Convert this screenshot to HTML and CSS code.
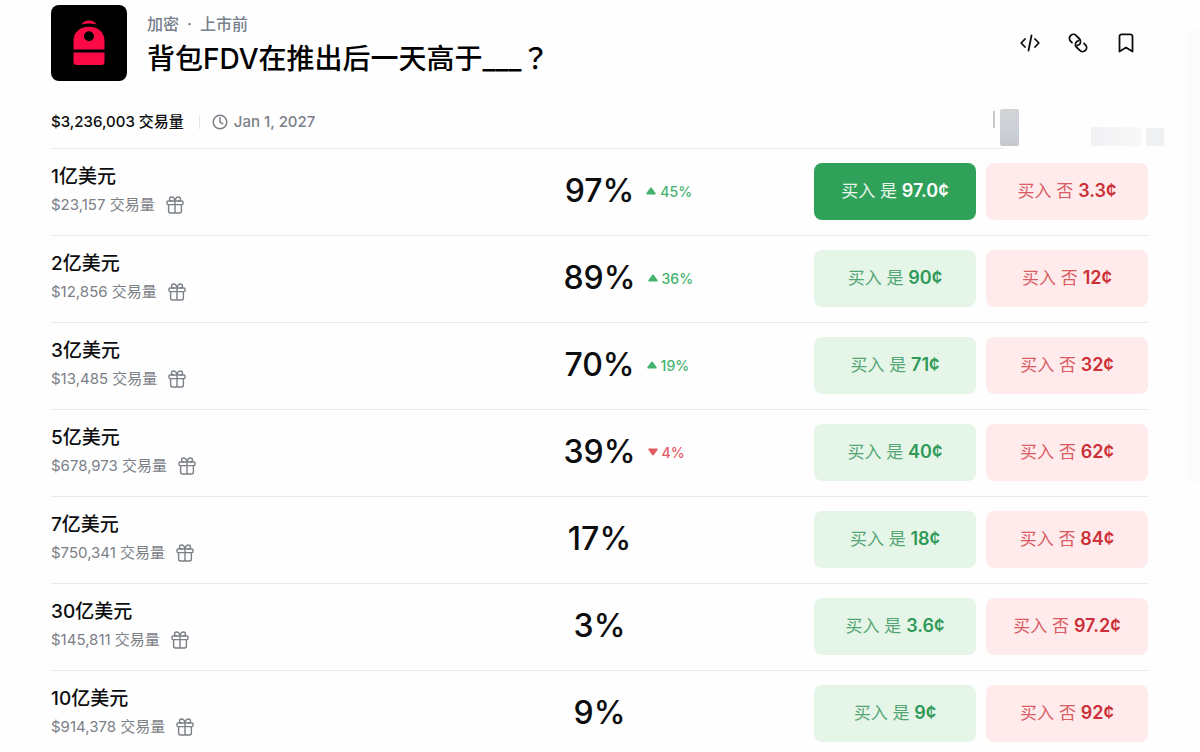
FILE: index.html
```html
<!DOCTYPE html>
<html lang="zh-CN">
<head>
<meta charset="utf-8">
<meta name="viewport" content="width=device-width, initial-scale=1">
<title>背包FDV在推出后一天高于___？</title>
<link rel="stylesheet" href="styles.css">
</head>
<body>
<svg class="sprite" aria-hidden="true">
  <symbol id="gift" viewBox="0 0 18 18"><g fill="none" stroke="currentColor" stroke-width="1.4" stroke-linecap="round" stroke-linejoin="round"><rect x="1" y="5" width="16" height="3.6" rx="1"/><path d="M2.6 8.6V15a2 2 0 0 0 2 2h8.8a2 2 0 0 0 2-2V8.600M9 5v12M9 5C8.600 2.600 7.300 1 5.500 1a2 2 0 0 0 0 4M9 5c.4-2.400 1.700-4 3.500-4a2 2 0 0 1 0 4"/></g></symbol>
  <symbol id="up" viewBox="0 0 10 8"><path d="M4.200.9.5 6.100C0 7 .5 7.600 1.300 7.600h7.400c.8 0 1.300-.6.8-1.500L5.800.9C5.400.3 4.600.3 4.200.9z" fill="currentColor"/></symbol>
  <symbol id="down" viewBox="0 0 10 8"><path d="M4.200 7.100.5 1.900C0 1 .5.400 1.300.400h7.400c.8 0 1.300.6.8 1.500L5.800 7.100c-.4.6-1.200.6-1.600 0z" fill="currentColor"/></symbol>
</svg>
<main class="page">
  <header class="head">
    <svg class="logo" viewBox="0 0 76 76" aria-hidden="true">
      <rect width="76" height="76" rx="8" fill="#000"/>
      <path d="M30.500 19.500c1.500-2.500 4.200-4 7.500-4s6 1.500 7.500 4c-4.600-1.300-10.400-1.300-15 0z" fill="#fb0a46"/>
      <path fill-rule="evenodd" d="M22.500 44.500V36c0-8.500 6-14.200 15.500-14.200S53.500 27.500 53.500 36v8.500zM38 26.300a5 5 0 1 0 0 10 5 5 0 0 0 0-10z" fill="#fb0a46"/>
      <path d="M22.500 47.500h31v9.500a3 3 0 0 1-3 3h-25a3 3 0 0 1-3-3z" fill="#fb0a46"/>
    </svg>
    <div class="heading">
      <p class="crumbs"><span>加密</span><span>·</span><span>上市前</span></p>
      <h1 class="title">背包FDV在推出后一天高于___<span class="mark" lang="zh-TW">？</span></h1>
    </div>
    <div class="tools">
      <button class="tool" aria-label="嵌入"><svg viewBox="0 0 20 20"><path d="M5 6 1.200 10 5 14M15 6l3.800 4-3.800 4M11.500 2.500l-3 15"/></svg></button>
      <button class="tool" aria-label="复制链接"><svg viewBox="0 0 20 20"><g transform="rotate(45 10 10)"><path d="M5.500 14H3.500a4 4 0 0 1 0-8H8a4 4 0 0 1 3.400 6.100"/><path d="M14.500 6h2a4 4 0 0 1 0 8H12a4 4 0 0 1-3.400-6.100"/></g></svg></button>
      <button class="tool" aria-label="收藏"><svg viewBox="0 0 20 20"><path d="M3.500 18.500V3.500a2.200 2.200 0 0 1 2.200-2.200h8.600a2.200 2.200 0 0 1 2.200 2.200v15L10 14.500z"/></svg></button>
    </div>
  </header>
  <div class="meta">
    <span class="total">$3,236,003 交易量</span>
    <span class="divider"></span>
    <svg class="clock" viewBox="0 0 16 16" aria-hidden="true"><circle cx="8" cy="8" r="6.800"/><path d="M8 3.800V8l2.800 1.800"/></svg>
    <time datetime="2027-01-01">Jan 1, 2027</time>
    <div class="mask" aria-hidden="true"><i class="mask-line"></i><i class="mask-block"></i><i class="mask-pale"></i><i class="mask-square"></i></div>
  </div>
  <ul class="markets">
    <li class="row">
      <div class="info"><h2 class="name">1亿美元</h2><p class="volume">$23,157 交易量 <svg class="gift"><use href="#gift"/></svg></p></div>
      <strong class="chance">97%</strong>
      <div class="side"><span class="change"><svg class="arrow"><use href="#up"/></svg>45%</span>
      <div class="actions"><button class="buy yes active">买入 是 <b>97.0¢</b></button><button class="buy no">买入 否 <b>3.3¢</b></button></div></div>
    </li>
    <li class="row">
      <div class="info"><h2 class="name">2亿美元</h2><p class="volume">$12,856 交易量 <svg class="gift"><use href="#gift"/></svg></p></div>
      <strong class="chance">89%</strong>
      <div class="side"><span class="change"><svg class="arrow"><use href="#up"/></svg>36%</span>
      <div class="actions"><button class="buy yes">买入 是 <b>90¢</b></button><button class="buy no">买入 否 <b>12¢</b></button></div></div>
    </li>
    <li class="row">
      <div class="info"><h2 class="name">3亿美元</h2><p class="volume">$13,485 交易量 <svg class="gift"><use href="#gift"/></svg></p></div>
      <strong class="chance">70%</strong>
      <div class="side"><span class="change"><svg class="arrow"><use href="#up"/></svg>19%</span>
      <div class="actions"><button class="buy yes">买入 是 <b>71¢</b></button><button class="buy no">买入 否 <b>32¢</b></button></div></div>
    </li>
    <li class="row">
      <div class="info"><h2 class="name">5亿美元</h2><p class="volume">$678,973 交易量 <svg class="gift"><use href="#gift"/></svg></p></div>
      <strong class="chance">39%</strong>
      <div class="side"><span class="change fall"><svg class="arrow"><use href="#down"/></svg>4%</span>
      <div class="actions"><button class="buy yes">买入 是 <b>40¢</b></button><button class="buy no">买入 否 <b>62¢</b></button></div></div>
    </li>
    <li class="row">
      <div class="info"><h2 class="name">7亿美元</h2><p class="volume">$750,341 交易量 <svg class="gift"><use href="#gift"/></svg></p></div>
      <strong class="chance">17%</strong>
      <div class="side"><div class="actions"><button class="buy yes">买入 是 <b>18¢</b></button><button class="buy no">买入 否 <b>84¢</b></button></div></div>
    </li>
    <li class="row">
      <div class="info"><h2 class="name">30亿美元</h2><p class="volume">$145,811 交易量 <svg class="gift"><use href="#gift"/></svg></p></div>
      <strong class="chance">3%</strong>
      <div class="side"><div class="actions"><button class="buy yes">买入 是 <b>3.6¢</b></button><button class="buy no">买入 否 <b>97.2¢</b></button></div></div>
    </li>
    <li class="row">
      <div class="info"><h2 class="name">10亿美元</h2><p class="volume">$914,378 交易量 <svg class="gift"><use href="#gift"/></svg></p></div>
      <strong class="chance">9%</strong>
      <div class="side"><div class="actions"><button class="buy yes">买入 是 <b>9¢</b></button><button class="buy no">买入 否 <b>92¢</b></button></div></div>
    </li>
  </ul>
</main>
<div class="scroll-edge" aria-hidden="true"></div>
</body>
</html>
```
FILE: styles.css
```css
* { box-sizing: border-box; }
body {
  margin: 0;
  overflow: hidden;
  background: #fefefe;
  color: #0c0d0e;
  font-family: Inter, "Noto Sans CJK SC", sans-serif;
}
h1, h2, p, ul { margin: 0; padding: 0; }
button { font: inherit; border: 0; cursor: pointer; }
.sprite { position: absolute; width: 0; height: 0; }
.page { padding: 5px 52px 0 51px; }

.head { display: flex; align-items: center; gap: 20px; }
.logo { width: 76px; height: 76px; flex: none; }
.heading { flex: 1; padding-top: 6px; }
.crumbs {
  display: flex;
  gap: 8px;
  color: #77808d;
  font-size: 16px;
  font-weight: 500;
  line-height: 24px;
}
.title { color: #000; font-size: 28px; font-weight: 500; line-height: 42px; }
.mark { font-family: "Noto Sans CJK TC", sans-serif; }
.tools { display: flex; gap: 20px; padding-right: 8px; }
.tool {
  display: flex;
  align-items: center;
  justify-content: center;
  width: 28px;
  height: 28px;
  padding: 0;
  background: none;
  color: #0c0d0e;
}
.tool svg {
  width: 20px;
  height: 20px;
  fill: none;
  stroke: currentColor;
  stroke-width: 1.8;
  stroke-linecap: round;
  stroke-linejoin: round;
}

.meta {
  position: relative;
  display: flex;
  align-items: center;
  height: 68px;
  padding-top: 14px;
  border-bottom: 1px solid #e8e9ea;
  color: #7b8087;
  font-size: 15px;
  font-weight: 500;
  line-height: 24px;
}
.total { color: #0c0d0e; }
.divider { width: 1px; height: 14px; margin: 0 12px 0 15px; background: #e4e5e7; }
.clock {
  width: 16px;
  height: 16px;
  margin-right: 6px;
  fill: none;
  stroke: currentColor;
  stroke-width: 1.5;
  stroke-linecap: round;
}
.mask {
  position: absolute;
  right: -16px;
  bottom: -1px;
  display: flex;
  align-items: flex-end;
  width: 161px;
  height: 41px;
  padding-bottom: 3px;
  background: #fefefe;
}
.mask-line { width: 2px; height: 17px; margin: 0 5px 18px -10px; background: #c9cacd; }
.mask-block { width: 19px; height: 37px; border-radius: 2px; background: linear-gradient(#d2d3d7, #cdd1d8 50%, #c5c9ce); }
.mask-pale { width: 50px; height: 19px; margin-left: auto; background: linear-gradient(90deg, #f1f2f4, #f8f8f9); }
.mask-square { width: 18px; height: 18px; margin-left: 5px; background: #eff0f2; }

.markets { list-style: none; }
.row {
  display: grid;
  grid-template-columns: 1fr auto 1fr;
  align-items: center;
  height: 87px;
  padding-bottom: 2px;
  border-bottom: 1px solid #e8e9ea;
}
.name { font-size: 19px; font-weight: 500; line-height: 28px; }
.volume {
  display: flex;
  align-items: center;
  gap: 11px;
  color: #7b8087;
  font-size: 15px;
  line-height: 28px;
}
.gift { width: 18px; height: 18px; }
.chance { font-size: 32px; font-weight: 500; line-height: 40px; }
.side { display: flex; align-items: center; padding-left: 12px; }
.change {
  display: flex;
  align-items: center;
  gap: 4px;
  color: #43b36d;
  font-size: 14px;
  font-weight: 500;
}
.fall { color: #e25c63; }
.arrow { width: 10px; height: 8px; }
.actions { display: flex; gap: 10px; margin-left: auto; }
.buy {
  width: 162px;
  height: 57px;
  padding: 0;
  border-radius: 8px;
  font-size: 17px;
  line-height: 24px;
}
.buy b { font-size: 18px; font-weight: 600; }
.yes { background: #e5f6e9; color: #55a574; }
.yes b { color: #319a58; }
.no { background: #ffebec; color: #d95c64; }
.no b { color: #cc3038; }
.active { background: #30a159; color: #e9f7ee; }
.active b { color: #fff; }

.scroll-edge {
  position: absolute;
  top: 30px;
  right: 0;
  width: 12px;
  height: 453px;
  background: #fbfbfc;
}
```
